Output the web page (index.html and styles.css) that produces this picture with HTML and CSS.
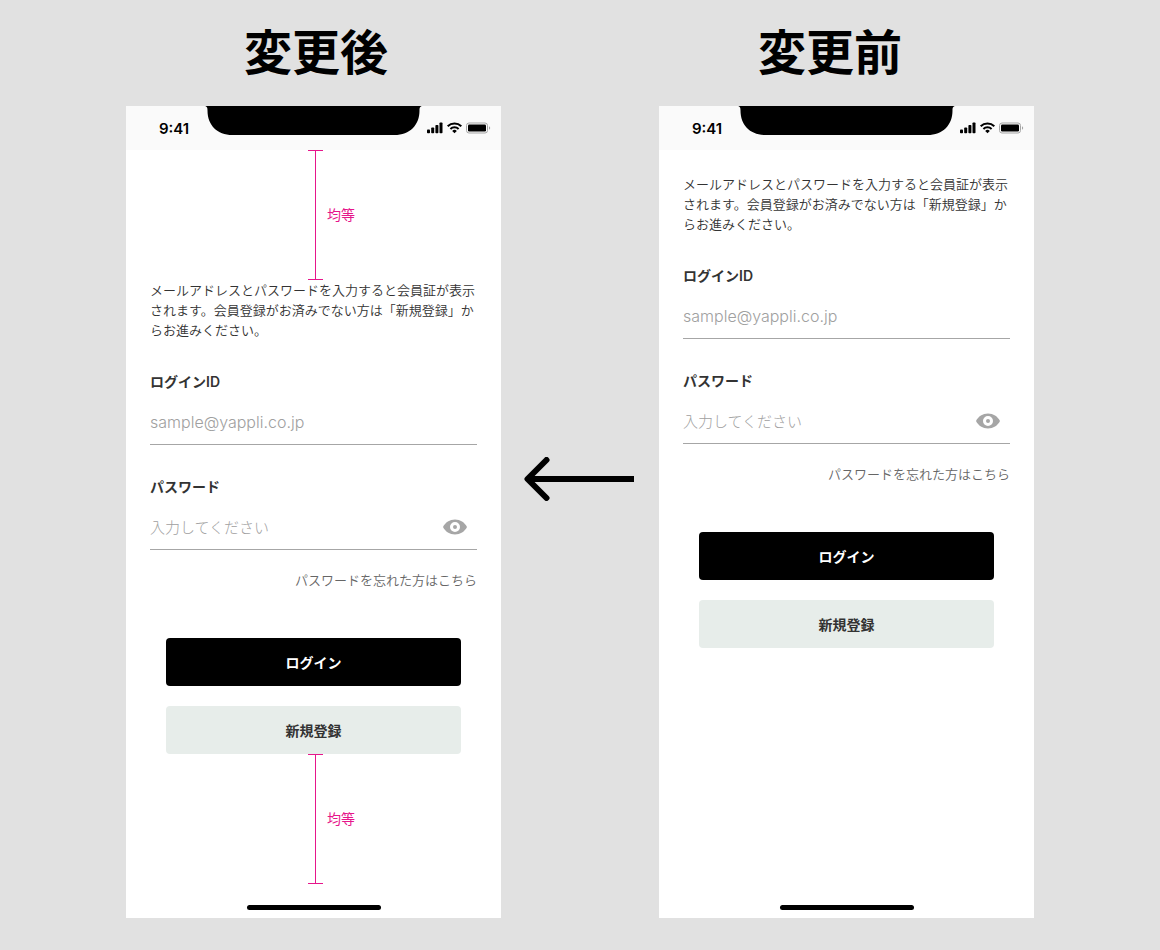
FILE: index.html
```html
<!DOCTYPE html>
<html lang="ja">
<head>
    <meta charset="UTF-8">
    <meta name="viewport" content="width=device-width, initial-scale=1.0">
    <title>ログイン画面 変更前・変更後</title>
    <link rel="stylesheet" href="styles.css">
</head>
<body>
    <!-- shared icons -->
    <svg class="sprite" aria-hidden="true">
        <symbol id="notch" viewBox="0 0 219 29">
            <path d="M0 0h219c-3 0-3.500 1.500-3.500 4.500C215.500 19 206 29 190.500 29h-162C13 29 3.500 19 3.500 4.500 3.500 1.500 3 0 0 0z"/>
        </symbol>
        <symbol id="status-icons" viewBox="0 0 64 12">
            <rect x="0" y="7.500" width="3" height="3.700" rx="0.800"/>
            <rect x="4.200" y="5.500" width="3" height="5.700" rx="0.800"/>
            <rect x="8.400" y="3" width="3" height="8.200" rx="0.800"/>
            <rect x="12.500" y="0.500" width="3" height="10.700" rx="0.800"/>
            <path d="M20.700 4.300a9.700 9.700 0 0 1 13.600 0" fill="none" stroke="#000" stroke-width="2"/>
            <path d="M23.400 7a5.900 5.900 0 0 1 8.200 0" fill="none" stroke="#000" stroke-width="2"/>
            <path d="M25.200 8.900a3.400 3.400 0 0 1 4.600 0L27.500 11.300z"/>
            <rect x="39.500" y="1" width="21" height="10" rx="2.500" fill="none" stroke="#a5a5a5"/>
            <rect x="41" y="2.500" width="18" height="7" rx="1.300"/>
            <path d="M62 4.200v3.600c1.600-.600 1.600-3 0-3.600z" fill="#a5a5a5"/>
        </symbol>
        <symbol id="eye" viewBox="0 0 24 16">
            <path fill-rule="evenodd" d="M12 .500C6.800.500 2.300 3.400 0 8c2.300 4.600 6.800 7.500 12 7.500S21.700 12.600 24 8C21.700 3.400 17.200.500 12 .500zM12 3a5 5 0 1 1 0 10 5 5 0 0 1 0-10zM12 6a2 2 0 1 0 0 4 2 2 0 0 0 0-4z"/>
        </symbol>
    </svg>

    <header class="titles">
        <h1>変更後</h1>
        <h1>変更前</h1>
    </header>

    <main class="comparison">
        <section class="phone">
            <div class="status-bar">
                <div class="time">9:41</div>
                <svg class="notch"><use href="#notch"/></svg>
                <svg class="status-icons"><use href="#status-icons"/></svg>
            </div>
            <div class="spacing">
                <div class="bracket"></div>
                <span>均等</span>
            </div>
            <form class="login-form">
                <p class="lead">メールアドレスとパスワードを入力すると会員証が表示されます。会員登録がお済みでない方は「新規登録」からお進みください。</p>
                <div class="form-group">
                    <label for="after-id">ログインID</label>
                    <div class="field">
                        <input type="email" id="after-id" placeholder="sample@yappli.co.jp">
                    </div>
                </div>
                <div class="form-group">
                    <label for="after-password">パスワード</label>
                    <div class="field">
                        <input type="password" id="after-password" placeholder="入力してください">
                        <button type="button" class="eye-button" aria-label="パスワードを表示"><svg><use href="#eye"/></svg></button>
                    </div>
                </div>
                <a href="#" class="forgot-link">パスワードを忘れた方はこちら</a>
                <div class="buttons">
                    <button type="submit" class="button login-button">ログイン</button>
                    <button type="button" class="button signup-button">新規登録</button>
                </div>
            </form>
            <div class="spacing">
                <div class="bracket"></div>
                <span>均等</span>
            </div>
            <div class="home-indicator"></div>
        </section>

        <div class="arrow">
            <svg viewBox="0 0 110 44" fill="none" stroke="#000" stroke-width="6">
                <path d="M4 22h106"/>
                <path d="M22.500 3L3.500 22l19 19" stroke-linecap="round" stroke-linejoin="round"/>
            </svg>
        </div>

        <section class="phone before">
            <div class="status-bar">
                <div class="time">9:41</div>
                <svg class="notch"><use href="#notch"/></svg>
                <svg class="status-icons"><use href="#status-icons"/></svg>
            </div>
            <form class="login-form">
                <p class="lead">メールアドレスとパスワードを入力すると会員証が表示されます。会員登録がお済みでない方は「新規登録」からお進みください。</p>
                <div class="form-group">
                    <label for="before-id">ログインID</label>
                    <div class="field">
                        <input type="email" id="before-id" placeholder="sample@yappli.co.jp">
                    </div>
                </div>
                <div class="form-group">
                    <label for="before-password">パスワード</label>
                    <div class="field">
                        <input type="password" id="before-password" placeholder="入力してください">
                        <button type="button" class="eye-button" aria-label="パスワードを表示"><svg><use href="#eye"/></svg></button>
                    </div>
                </div>
                <a href="#" class="forgot-link">パスワードを忘れた方はこちら</a>
                <div class="buttons">
                    <button type="submit" class="button login-button">ログイン</button>
                    <button type="button" class="button signup-button">新規登録</button>
                </div>
            </form>
            <div class="home-indicator"></div>
        </section>
    </main>
</body>
</html>
```
FILE: styles.css
```css
* {
    margin: 0;
    padding: 0;
    box-sizing: border-box;
    font-family: Inter, 'Noto Sans CJK JP', sans-serif;
}

body {
    background-color: #e1e1e1;
    color: #333;
}

.sprite {
    display: none;
}

.titles {
    display: flex;
    justify-content: center;
    gap: 370px;
    padding: 21px 14px 21px 0;
}

.titles h1 {
    font-size: 48px;
    line-height: 64px;
    font-weight: 700;
    color: #000;
}

.comparison {
    display: grid;
    grid-template-columns: 1fr 158px 1fr;
    padding: 0 126px 32px;
}

/* phone */
.phone {
    display: flex;
    flex-direction: column;
    aspect-ratio: 375 / 812;
    background-color: white;
}

.status-bar {
    display: grid;
    grid-template-columns: 1fr 219px 1fr;
    align-items: center;
    height: 44px;
    background-color: #fafafa;
}

.time {
    padding: 2px 0 0 18px;
    text-align: center;
    font-size: 15px;
    line-height: 20px;
    font-weight: 600;
    color: #000;
}

.notch {
    width: 219px;
    height: 29px;
    align-self: start;
}

.status-icons {
    width: 64px;
    height: 12px;
    margin-left: 4px;
}

.home-indicator {
    width: 134px;
    height: 5px;
    margin: 21px auto 8px;
    border-radius: 3px;
    background-color: #000;
}

/* equal spacing markers */
.spacing {
    flex: 1;
    display: flex;
    align-items: center;
    gap: 4px;
    padding-left: 182px;
    font-size: 14px;
    line-height: 20px;
    color: #e6168b;
}

.bracket {
    display: flex;
    justify-content: center;
    align-self: stretch;
    width: 15px;
    border-top: 1px solid #e6168b;
    border-bottom: 1px solid #e6168b;
}

.bracket::before {
    content: '';
    width: 1px;
    background-color: #e6168b;
}

/* login form */
.login-form {
    display: flex;
    flex-direction: column;
    padding: 0 24px;
}

.before .login-form {
    flex: 1;
    padding-top: 24px;
}

.lead {
    font-size: 13px;
    line-height: 20px;
    font-weight: 350;
}

.form-group {
    margin-top: 32px;
}

.form-group label {
    display: block;
    margin-bottom: 8px;
    font-size: 14px;
    line-height: 20px;
    font-weight: 600;
}

.field {
    display: flex;
    align-items: center;
    height: 45px;
    padding-right: 10px;
    border-bottom: 1px solid #a6a6a6;
}

.field input {
    flex: 1;
    min-width: 0;
    height: 44px;
    border: none;
    outline: none;
    background: none;
    font-size: 16px;
    font-weight: 300;
    color: #333;
}

.field input[type="password"] {
    font-size: 15px;
}

.field input::placeholder {
    color: #a0a0a0;
}

.eye-button {
    width: 24px;
    height: 16px;
    border: none;
    background: none;
    cursor: pointer;
}

.eye-button svg {
    display: block;
    width: 24px;
    height: 16px;
    fill: #a6a6a6;
}

.forgot-link {
    align-self: flex-end;
    margin-top: 20px;
    font-size: 13px;
    line-height: 20px;
    font-weight: 350;
    color: #666;
    text-decoration: none;
}

.buttons {
    display: flex;
    flex-direction: column;
    gap: 20px;
    margin-top: 48px;
    padding: 0 16px;
}

.button {
    height: 48px;
    border: none;
    border-radius: 4px;
    font-size: 14px;
    font-weight: 600;
    cursor: pointer;
}

.login-button {
    background-color: #000;
    color: white;
}

.signup-button {
    background-color: #e7edea;
    color: #333;
}

/* arrow */
.arrow {
    display: flex;
    align-items: center;
    justify-content: center;
    padding: 0 2px 66px 0;
}

.arrow svg {
    width: 110px;
    height: 44px;
}
```
